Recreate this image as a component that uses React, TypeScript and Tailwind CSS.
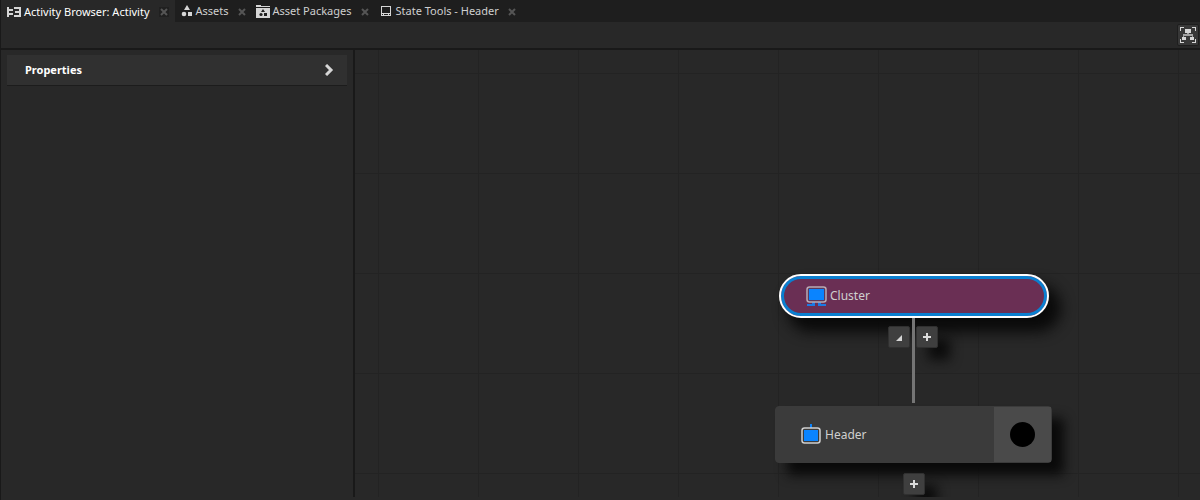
import { useState } from 'react';
import type { ReactNode } from 'react';

interface Tab {
  id: string;
  label: string;
  icon: ReactNode;
}

const ActivityIcon = () => (
  <svg width="14" height="10" viewBox="0 0 14 10" shapeRendering="crispEdges" fill="#d6d6d6" aria-hidden="true">
    <path d="M0 0h2v2h4v2H2v2h4v2H2v2H0zM7 0h7v10H7V8h5V6H8V4h4V2H7z" />
  </svg>
);

const AssetsIcon = () => (
  <svg width="12" height="12" viewBox="0 0 12 12" fill="#d6d6d6" aria-hidden="true">
    <path d="M6 0l3 5H3z" />
    <circle cx="3" cy="9" r="2.3" />
    <path d="M7 7h4v4H7z" />
  </svg>
);

const PackageIcon = () => (
  <svg width="14" height="13" viewBox="0 0 14 13" aria-hidden="true">
    <path d="M0 0h5v1h9v1H0z" fill="#d6d6d6" shapeRendering="crispEdges" />
    <path d="M0 3h14v10H0z" fill="#d6d6d6" shapeRendering="crispEdges" />
    <path d="M7 4l2 3H5zM8 8h3v3H8z" fill="#1f1f1f" />
    <circle cx="5" cy="9.5" r="1.6" fill="#1f1f1f" />
  </svg>
);

const StateIcon = () => (
  <svg width="14" height="10" viewBox="-2 0 14 10" shapeRendering="crispEdges" fill="#d6d6d6" aria-hidden="true">
    <path d="M0 0h10v10H0zM1 1v6h8V1zM1 8v1h1V8zM8 8v1h1V8zM3 8v1h4V8z" fillRule="evenodd" />
  </svg>
);

const CloseIcon = () => (
  <svg width="8" height="8" viewBox="0 0 8 8" stroke="#555555" strokeWidth="2" aria-hidden="true">
    <path d="M1 1l6 6M7 1L1 7" />
  </svg>
);

const FitIcon = () => (
  <svg width="16" height="16" viewBox="0 0 16 16" shapeRendering="crispEdges" fill="#d6d6d6" aria-hidden="true">
    <path d="M0 0h4v1H1v3H0zM12 0h4v4h-1V1h-3zM0 12h1v3h3v1H0zM15 12h1v4h-4v-1h3z" />
    <path d="M5 2h6v4H5zM2 10h4v3H2zM10 10h4v3h-4z" />
    <path d="M7 6h2v1h4v3h-1V9H4v1H3V7h4z" fill="#a3a3a3" />
  </svg>
);

const ClusterIcon = () => (
  <svg width="21" height="20" viewBox="0 0 21 20" aria-hidden="true">
    <path d="M1 18h5v-2h3v4H1zM12 16h3v2h5v2h-8z" fill="#1a7ae6" shapeRendering="crispEdges" />
    <rect x="1" y="1" width="19" height="15" rx="2.5" fill="#5a3a5c" stroke="#b9aab4" strokeWidth="1.5" />
    <path d="M3 3h15v11H3z" fill="#0a84ff" />
  </svg>
);

const HeaderIcon = () => (
  <svg width="20" height="21" viewBox="0 0 20 21" aria-hidden="true">
    <path d="M9 0h2v4H9z" fill="#0a84ff" />
    <rect x="1" y="4" width="18" height="15" rx="2.5" fill="#3b3b3b" stroke="#cfcfcf" strokeWidth="1.5" />
    <path d="M3 6h14v11H3z" fill="#0a84ff" />
  </svg>
);

const PlusIcon = () => (
  <svg width="8" height="8" viewBox="0 0 8 8" shapeRendering="crispEdges" fill="#dadada" aria-hidden="true">
    <path d="M3 0h2v3h3v2H5v3H3V5H0V3h3z" />
  </svg>
);

const tabs: Tab[] = [
  { id: 'activity', label: 'Activity Browser: Activity', icon: <ActivityIcon /> },
  { id: 'assets', label: 'Assets', icon: <AssetsIcon /> },
  { id: 'packages', label: 'Asset Packages', icon: <PackageIcon /> },
  { id: 'state', label: 'State Tools - Header', icon: <StateIcon /> },
];

interface NodeButtonProps {
  label: string;
  className: string;
  children: ReactNode;
}

const NodeButton = ({ label, className, children }: NodeButtonProps) => (
  <button
    type="button"
    aria-label={label}
    className={`absolute flex items-center justify-center size-[22px] rounded-xs border border-[#303030] bg-[#3f3f3f] ${className}`}
  >
    {children}
  </button>
);

export default function App() {
  const [active, setActive] = useState('activity');
  const [open, setOpen] = useState(false);

  return (
    <div className="flex flex-col h-screen overflow-hidden bg-[#282828] border-l border-[#191919] pb-[3px] font-['Noto_Sans','Open_Sans',sans-serif] text-[11px] text-[#cfcfcf]">
      <div role="tablist" className="flex h-[22px] shrink-0 bg-[#1e1e1e]">
        {tabs.map((tab) => (
          <div
            key={tab.id}
            className={`flex items-center pl-1.5 ${
              active === tab.id ? 'gap-[9px] pr-1.5 pt-0.5 bg-[#282828] text-white' : 'gap-2 pr-[3px]'
            }`}
          >
            <button
              type="button"
              role="tab"
              aria-selected={active === tab.id}
              onClick={() => setActive(tab.id)}
              className="flex items-center gap-[3px] whitespace-nowrap"
            >
              {tab.icon}
              {tab.label}
            </button>
            <button
              type="button"
              aria-label={`Close ${tab.label}`}
              className={`flex items-center justify-center size-2.5 ${active === tab.id ? 'bg-[#202020]' : 'mt-0.5'}`}
            >
              <CloseIcon />
            </button>
          </div>
        ))}
      </div>

      <div className="flex items-center justify-end h-7 shrink-0 border-b-2 border-[#191919] pr-px">
        <button
          type="button"
          aria-label="Fit graph to view"
          className="flex items-center justify-center size-[22px] rounded-xs border border-[#1e1e1e] bg-[#383838]"
        >
          <FitIcon />
        </button>
      </div>

      <div className="flex flex-1 min-h-0">
        <aside className="w-[354px] shrink-0 border-r-2 border-[#191919] px-1.5 pt-[5px]">
          <button
            type="button"
            aria-expanded={open}
            onClick={() => setOpen(!open)}
            className="flex items-center justify-between w-full h-[31px] bg-[#303030] border-b border-[#1c1c1c] pl-[18px] pr-[13px] font-bold text-white"
          >
            Properties
            <svg width="9" height="12" viewBox="0 0 9 12" fill="none" stroke="#d6d6d6" strokeWidth="3" aria-hidden="true">
              <path d="M1 1l5 5-5 5" />
            </svg>
          </button>
        </aside>

        <main className="relative flex-1 overflow-hidden bg-[linear-gradient(to_right,#232323_1px,transparent_1px),linear-gradient(to_bottom,#232323_1px,transparent_1px)] bg-size-[100px_100px] bg-position-[23px_23px]">
          <div className="absolute left-[424px] top-[224px] flex items-center gap-[3px] w-[270px] h-11 rounded-full border-2 border-white bg-[#6a2f54] pl-[25px] text-xs shadow-[10px_12px_14px_2px_#0a0a0a] inset-ring-3 inset-ring-[#0a7fd0]">
            <ClusterIcon />
            Cluster
          </div>

          <NodeButton label="Collapse children" className="left-[533px] top-[276px]">
            <svg width="6" height="6" viewBox="0 0 6 6" fill="#d6d6d6" className="mt-0.5" aria-hidden="true">
              <path d="M6 0v6H0z" />
            </svg>
          </NodeButton>
          <NodeButton label="Add to Cluster" className="left-[561px] top-[276px] shadow-[12px_12px_12px_#0c0c0c]">
            <PlusIcon />
          </NodeButton>

          <div className="absolute left-[557px] top-[268px] w-[3px] h-[85px] bg-[#757575]" />

          <div className="absolute left-[420px] top-[356px] flex items-center w-[277px] h-[57px] rounded-sm border border-[#3b3b3b] bg-[#3b3b3b] text-xs shadow-[12px_12px_12px_#0a0a0a]">
            <div className="flex items-center flex-1 gap-1 pl-[25px]">
              <HeaderIcon />
              Header
            </div>
            <div className="flex items-center justify-center w-[57px] h-full bg-[#4a4a4a]">
              <span className="size-[25px] rounded-full bg-black" />
            </div>
          </div>

          <NodeButton label="Add to Header" className="left-[548px] top-[423px] shadow-[12px_12px_12px_#0c0c0c]">
            <PlusIcon />
          </NodeButton>
        </main>
      </div>
    </div>
  );
}
